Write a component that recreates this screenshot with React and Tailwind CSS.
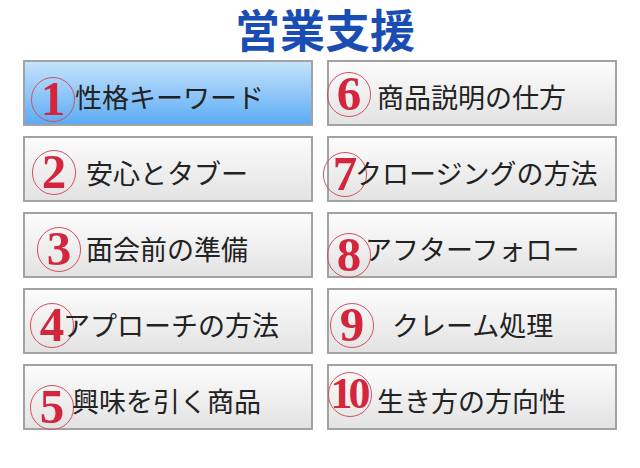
const items = [
  { n: '1', label: '性格キーワード', text: 'pl-[50px]', circle: 'left-[6px] top-[15px]', active: true },
  { n: '6', label: '商品説明の仕方', text: 'pl-[48px]', circle: 'left-[-2px] top-[10px]' },
  { n: '2', label: '安心とタブー', text: 'pl-[61px]', circle: 'left-[7px] top-[12px]' },
  { n: '7', label: 'クロージングの方法', text: 'pl-[26px]', circle: 'left-[-6px] top-[14px]' },
  { n: '3', label: '面会前の準備', text: 'pl-[61px]', circle: 'left-[12px] top-[13px]' },
  { n: '8', label: 'アフターフォロー', text: 'pl-[36px]', circle: 'left-[-2px] top-[19px]' },
  { n: '4', label: 'アプローチの方法', text: 'pl-[38px]', circle: 'left-[5px] top-[13px]' },
  { n: '9', label: 'クレーム処理', text: 'pl-[63px]', circle: 'left-[1px] top-[13px]' },
  { n: '5', label: '興味を引く商品', text: 'pl-[47px]', circle: 'left-[5px] top-[19px]' },
  { n: '10', label: '生き方の方向性', text: 'pl-[48px]', circle: 'left-[-1px] top-[6px]' },
];

function Circled({ n, className }) {
  return (
    <span
      className={`absolute ${className} w-[44px] h-[45px] rounded-full border-[1.5px] border-[#d4505e] flex items-center justify-center text-[#d3263c] font-bold leading-none ${
        n.length > 1 ? 'text-[44px] tracking-[-4px] pr-[3px]' : 'text-[49px]'
      }`}
      style={{ fontFamily: '"Liberation Serif", "Times New Roman", serif' }}
    >
      <span className="-translate-y-[1px]">{n}</span>
    </span>
  );
}

export default function App() {
  return (
    <div className="w-[640px] h-[468px] bg-white overflow-hidden" style={{ fontFamily: '"Noto Sans CJK JP", "Noto Sans", sans-serif' }}>
      <div className="pt-[2px] pb-[4px] flex justify-center pl-[10px]">
        <h1 className="text-[45px] leading-[54px] font-bold text-[#1a4db3]" style={{ fontFamily: '"Noto Sans CJK JP", serif' }}>
          営業支援
        </h1>
      </div>
      <div className="px-[23px] grid grid-cols-2 gap-x-[14px] gap-y-[10px]">
        {items.map((it) => (
          <button
            key={it.n}
            type="button"
            className={`relative h-[66px] border-2 border-[#a2a2a2] flex items-center pt-[6px] ${it.text} text-[27px] leading-none text-[#222] ${
              it.active
                ? 'bg-gradient-to-b from-[#c4e3fc] to-[#5aabf3]'
                : 'bg-gradient-to-b from-[#fcfcfc] to-[#e3e3e3]'
            }`}
          >
            <span className="relative z-10 whitespace-nowrap">{it.label}</span>
            <Circled n={it.n} className={it.circle} />
          </button>
        ))}
      </div>
    </div>
  );
}
